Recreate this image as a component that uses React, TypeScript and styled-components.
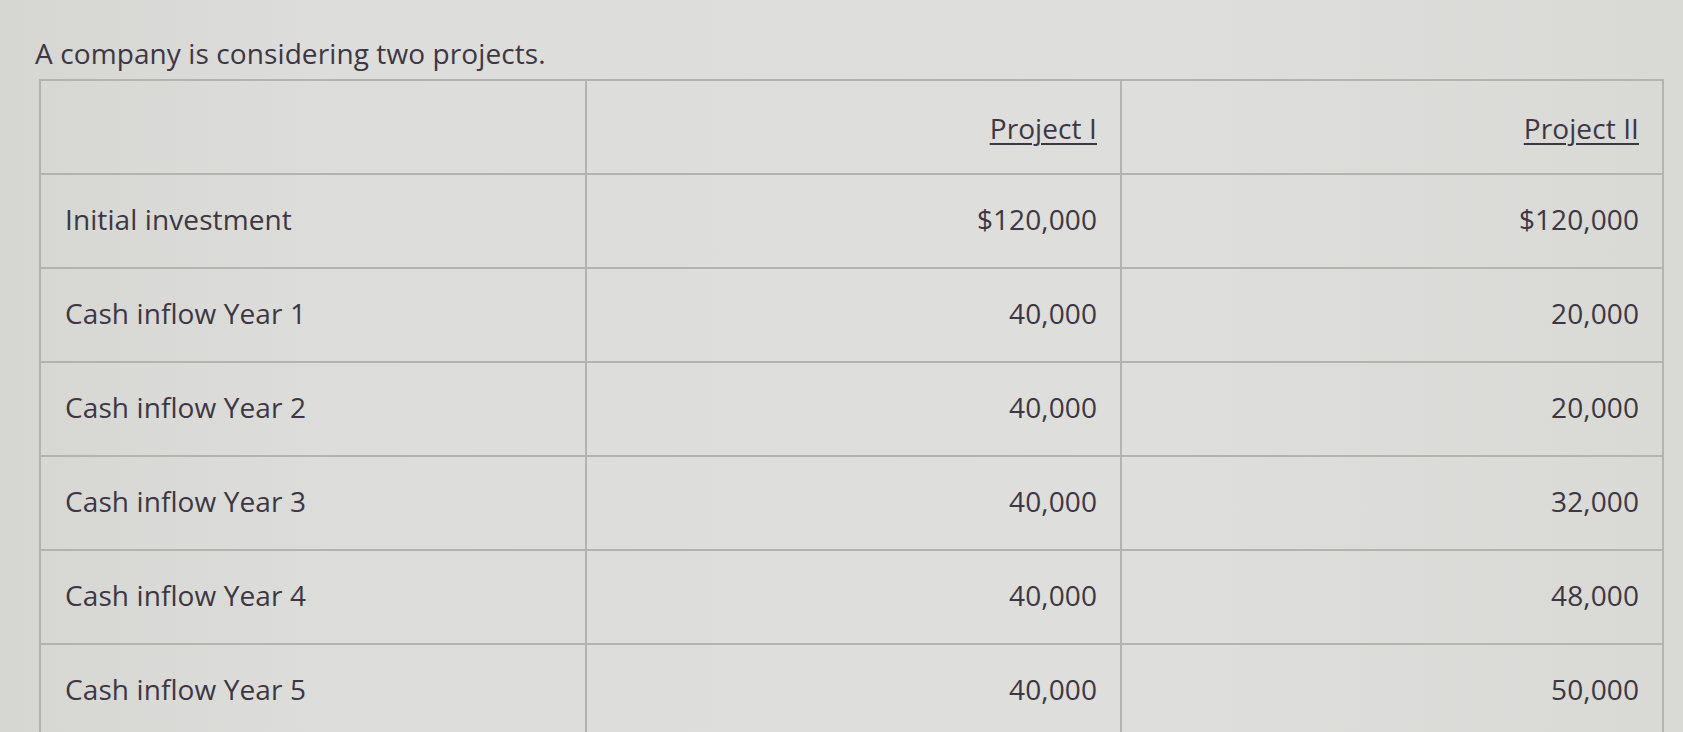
import React from "react";
import styled, { createGlobalStyle } from "styled-components";

const Global = createGlobalStyle`
  html, body {
    margin: 0;
    padding: 0;
    overflow: hidden;
    background: #dcdcd9;
  }
  * { box-sizing: border-box; }
`;

const Page = styled.div`
  width: 1683px;
  height: 732px;
  padding: 34px 0 0 35px;
  background: linear-gradient(90deg, #d6d6d3 0%, #dddddb 20%, #dededc 70%, #d9d9d6 100%);
  font-family: "Open Sans", "Noto Sans", sans-serif;
  color: #3d3743;
`;

const Title = styled.p`
  margin: 0 0 7px 0;
  font-size: 28px;
  line-height: 38px;
  letter-spacing: 0.1px;
`;

const Table = styled.table`
  margin-left: 4px;
  width: 1623px;
  border-collapse: collapse;
  table-layout: fixed;
`;

const Row = styled.tr`
  height: 94px;
`;

const Cell = styled.td<{ $align?: "left" | "right"; $header?: boolean }>`
  border: 2px solid #b3b3b0;
  font-size: 28px;
  line-height: 38px;
  letter-spacing: 0.1px;
  text-align: ${(p) => p.$align ?? "left"};
  padding: ${(p) => (p.$header ? "2px 23px 0 24px" : "0 23px 4px 24px")};
  vertical-align: middle;
  white-space: nowrap;
`;

const Underlined = styled.span`
  text-decoration: underline;
  text-decoration-thickness: 2px;
  text-underline-offset: 4px;
`;

const rows: [string, string, string][] = [
  ["Initial investment", "$120,000", "$120,000"],
  ["Cash inflow Year 1", "40,000", "20,000"],
  ["Cash inflow Year 2", "40,000", "20,000"],
  ["Cash inflow Year 3", "40,000", "32,000"],
  ["Cash inflow Year 4", "40,000", "48,000"],
  ["Cash inflow Year 5", "40,000", "50,000"],
];

export default function App() {
  return (
    <>
      <Global />
      <Page>
        <Title>A company is considering two projects.</Title>
        <Table>
          <colgroup>
            <col style={{ width: 546 }} />
            <col style={{ width: 535 }} />
            <col style={{ width: 542 }} />
          </colgroup>
          <tbody>
            <Row>
              <Cell $header />
              <Cell $header $align="right">
                <Underlined>Project I</Underlined>
              </Cell>
              <Cell $header $align="right">
                <Underlined>Project II</Underlined>
              </Cell>
            </Row>
            {rows.map(([label, a, b]) => (
              <Row key={label}>
                <Cell>{label}</Cell>
                <Cell $align="right">{a}</Cell>
                <Cell $align="right">{b}</Cell>
              </Row>
            ))}
          </tbody>
        </Table>
      </Page>
    </>
  );
}
